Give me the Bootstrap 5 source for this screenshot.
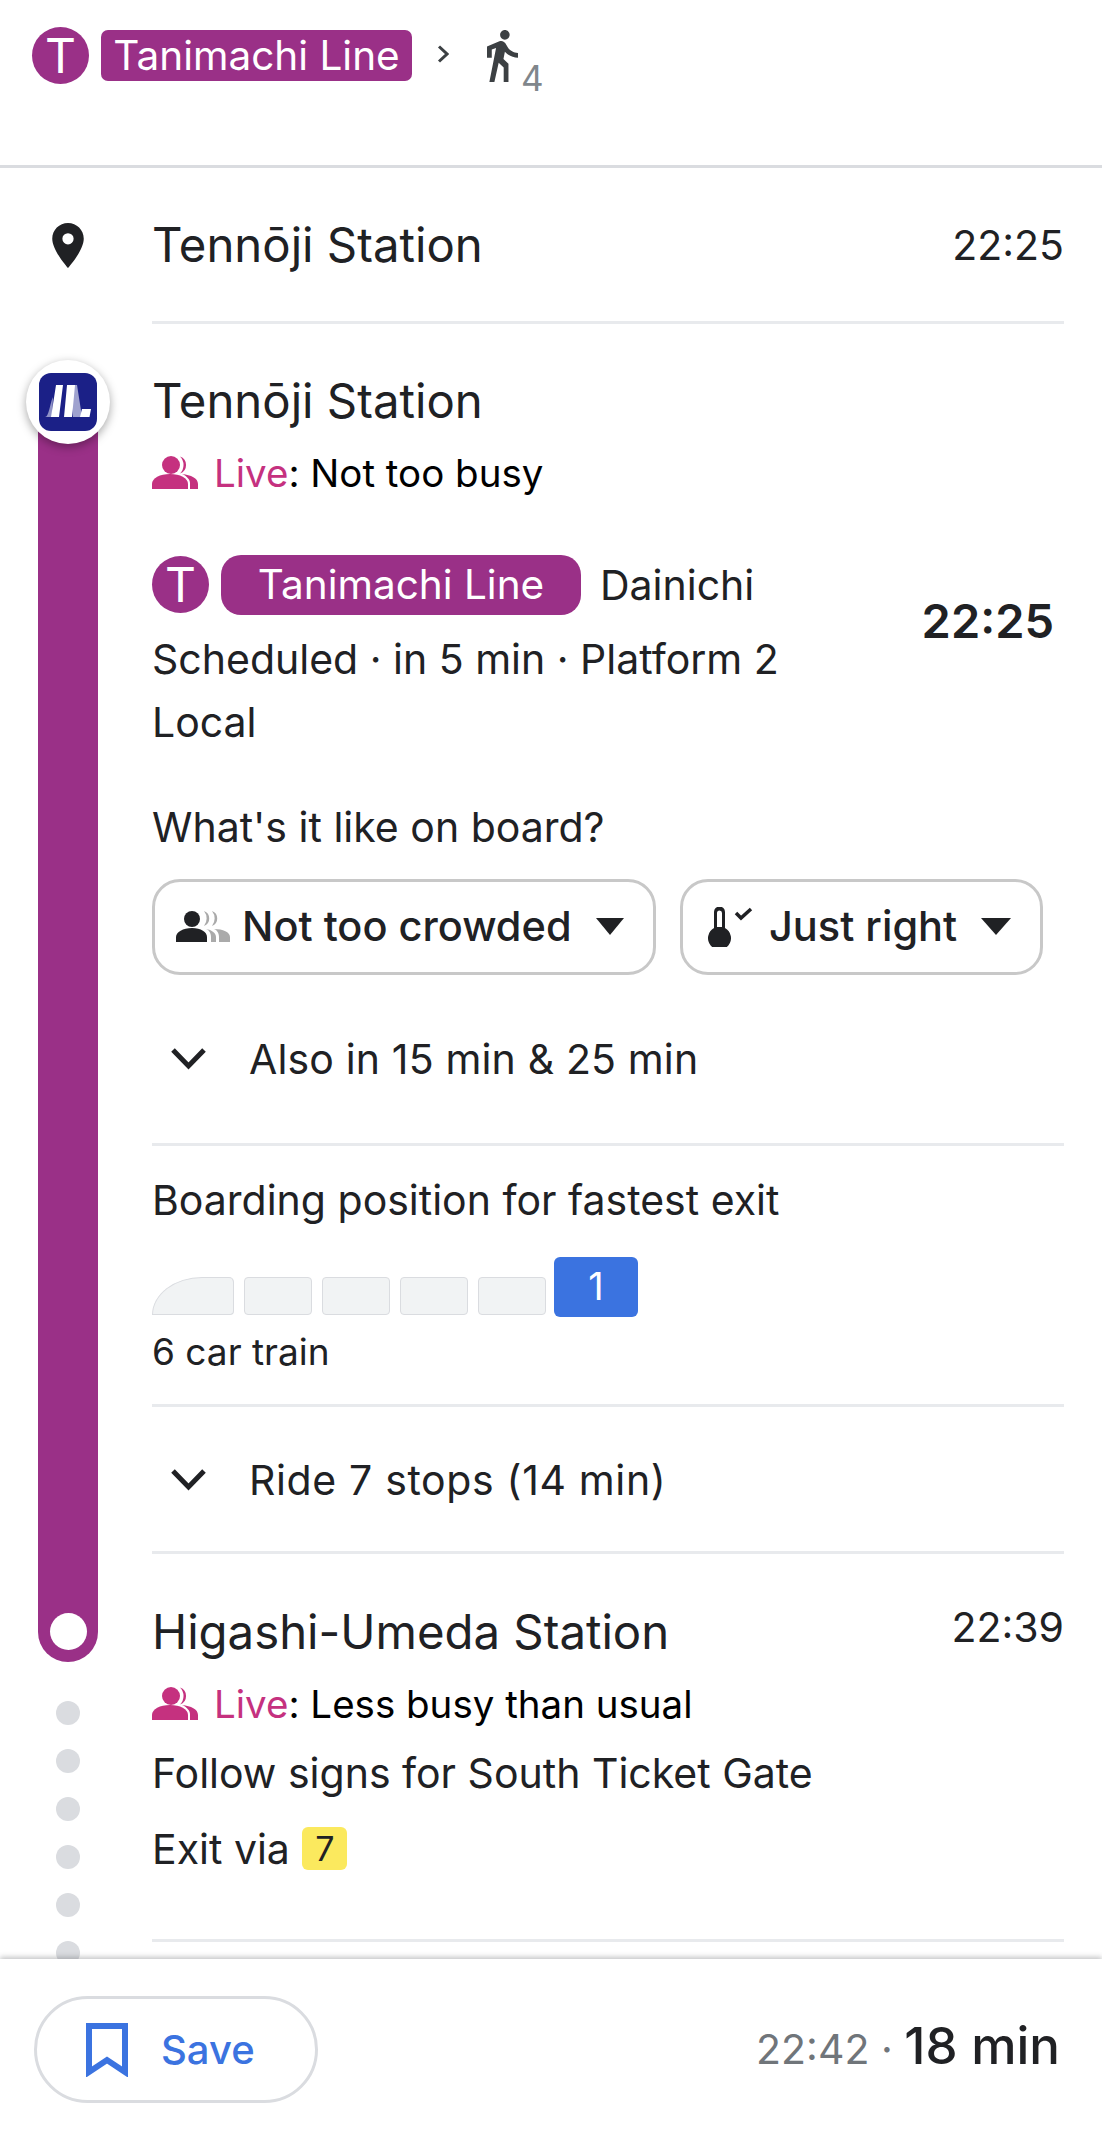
<!DOCTYPE html>
<html lang="en">
<head>
<meta charset="utf-8">
<title>Directions</title>
<link rel="stylesheet" href="https://cdn.jsdelivr.net/npm/bootstrap@5.3.0/dist/css/bootstrap.min.css">
<style>
html,body{height:100%;}
body{font-family:Inter,Roboto,"Liberation Sans",sans-serif;color:#202124;background:#fff;overflow:hidden;}
.shell{height:2129px;}
.top-bar{height:168px;border-bottom:3px solid #dadce0;padding:27px 0 0 32px;}
.t-mark{width:57px;height:57px;border-radius:50%;background:#9a3087;color:#fff;font-size:48px;line-height:57px;text-align:center;flex:none;}
.line-chip{background:#9a3087;color:#fff;font-size:40.5px;line-height:51px;height:51px;border-radius:7px;width:311px;text-align:center;margin:3px 0 0 12px;}
.crumb{margin:18px 0 0 25px;}
.walker{margin:3px 0 0 38px;}
.walk-num{font-size:35px;color:#80868b;line-height:40px;margin:31px 0 0 3px;}
.rule{height:3px;background:#e8eaed;}
.orig{height:153px;padding-top:2px;}
.rail-w{width:152px;flex:none;}
.pin{margin:55px 0 0 52px;display:block;}
.stop{font-size:47.3px;line-height:60px;font-weight:400;}
.stamp{font-size:41px;line-height:60px;}
.higa{margin-top:-5px;}
.leg{flex:1 1 auto;min-height:0;overflow:hidden;}
.rail{width:152px;flex:none;position:relative;padding:76px 0 0 38px;}
.bar{width:60px;height:1262px;background:#9a3087;border-radius:0 0 30px 30px;padding-bottom:12px;}
.bar-dot{width:37px;height:37px;border-radius:50%;background:#fff;}
.dots{gap:24px;padding:39px 0 0 18px;}
.dot-g{width:24px;height:24px;border-radius:50%;background:#dadce0;flex:none;}
.halo{position:absolute;left:26px;top:36px;width:84px;height:84px;border-radius:50%;background:#fff;box-shadow:0 3px 10px rgba(0,0,0,.35);}
.body-col{flex:1 1 auto;padding-right:38px;min-width:0;}
.txt{font-size:41px;line-height:50px;}
.live-line{font-size:38.5px;line-height:50px;margin-top:17px;}
.live{color:#c5317f;}
.ink{color:#000;}
.sec-a{padding-top:47px;}
.tr-row{margin-top:57px;}
.chip-big{background:#9a3087;color:#fff;font-size:40.5px;line-height:60px;height:60px;width:360px;border-radius:20px;text-align:center;margin:0 19px 0 12px;}
.tr-line{font-size:41px;line-height:63px;}
.tr-first{margin-top:13px;}
.tr-time{font-size:47px;font-weight:600;line-height:60px;margin:36px 10px 0 0;}
.ask{margin-top:48px;}
.picks{margin-top:27px;gap:24px;}
.pick{height:96px;border:3px solid #c8c8c8;border-radius:28px;background:#fff;font-size:41.5px;font-weight:450;color:#202124;padding:0;display:flex;align-items:center;}
.pick:hover{border-color:#c8c8c8;color:#202124;background:#fff;}
.pick-a{width:504px;padding-left:21px;}
.pick-b{width:363px;padding-left:25px;}
.exp{padding-left:19px;gap:43px;}
.exp-a{padding-top:59px;padding-bottom:59px;letter-spacing:.15px;}
.exp-b{padding-top:48px;padding-bottom:46px;letter-spacing:.65px;}
.board{padding-top:29px;}
.train{margin-top:32px;gap:10px;}
.car{width:68px;height:38px;background:#f1f3f4;border:1.5px solid #dadce0;border-radius:4px;margin-bottom:2px;}
.car-head{width:82px;border-radius:50px 5px 4px 0/38px 5px 4px 0;}
.car-on{width:84px;height:60px;background:#3b73e0;color:#fff;border-radius:6px;font-size:38px;line-height:58px;text-align:center;margin-left:-2px;}
.cars-note{font-size:37px;line-height:44px;margin-top:13px;padding-bottom:30px;}
.dest{padding-top:48px;}
.follow{margin-top:19px;}
.exit-row{margin-top:26px;padding-bottom:65px;}
.exit-tag{display:inline-block;width:45px;height:43px;line-height:43px;background:#fbe95e;border-radius:6px;text-align:center;margin-left:1px;font-size:34px;vertical-align:3px;}
.foot{height:170px;flex:none;background:#fff;padding:37px 42px 0 34px;box-shadow:0 -2px 5px rgba(60,64,67,.3);position:relative;}
.save{width:284px;height:107px;border:3px solid #dadce0;border-radius:54px;background:#fff;color:#3b73e0;font-size:40px;font-weight:500;padding:0 0 0 49px;display:flex;align-items:center;gap:33px;}
.save:hover{border-color:#dadce0;color:#3b73e0;background:#fff;}
.arrive{font-size:41px;color:#70757a;margin-top:12px;}
.span-big{font-size:51px;font-weight:500;color:#202124;}
</style>
</head>
<body>
<div class="shell d-flex flex-column">
  <header class="top-bar d-flex align-items-start flex-none">
    <div class="t-mark">T</div>
    <div class="line-chip">Tanimachi Line</div>
    <svg class="crumb" width="12" height="18" viewBox="0 0 12 18"><path d="M2 1.5 10 9l-8 7.5" fill="none" stroke="#3c4043" stroke-width="3"/></svg>
    <svg class="walker" width="31" height="52" viewBox="6 1.5 13 21.5" preserveAspectRatio="none"><path fill="#3c4043" d="M13.5 5.5c1.1 0 2-.9 2-2s-.9-2-2-2-2 .9-2 2 .9 2 2 2zM9.8 8.9L7 23h2.1l1.8-8 2.1 2v6h2v-7.5l-2.1-2 .6-3C14.8 12 16.8 13 19 13v-2c-1.9 0-3.5-1-4.3-2.4l-1-1.6c-.4-.6-1-1-1.7-1-.3 0-.5.1-.8.1L6 8.3V13h2V9.6l1.8-.7"/></svg>
    <div class="walk-num">4</div>
  </header>

  <section class="d-flex flex-none">
    <div class="rail-w"><svg class="pin" width="32" height="45" viewBox="5 2 14 20"><path fill="#202124" fill-rule="evenodd" d="M12 2C8.13 2 5 5.13 5 9c0 5.25 7 13 7 13s7-7.75 7-13c0-3.87-3.13-7-7-7zm0 9.500a2.500 2.500 0 1 1 0-5 2.500 2.500 0 0 1 0 5z"/></svg></div>
    <div class="body-col">
      <div class="orig d-flex justify-content-between align-items-center">
        <div class="stop">Tennōji Station</div>
        <div class="stamp">22:25</div>
      </div>
      <div class="rule"></div>
    </div>
  </section>

  <section class="leg d-flex">
    <div class="rail">
      <div class="bar d-flex align-items-end justify-content-center"><div class="bar-dot"></div></div>
      <div class="dots d-flex flex-column">
        <div class="dot-g"></div><div class="dot-g"></div><div class="dot-g"></div><div class="dot-g"></div><div class="dot-g"></div><div class="dot-g"></div>
      </div>
      <div class="halo d-flex align-items-center justify-content-center">
        <svg width="58" height="58" viewBox="0 0 58 58"><rect width="58" height="58" rx="12" fill="#1b2087"/><path d="M6 44C10 44 11 30 14 24l-1 20z" fill="#8f92c6"/><path d="M31 12h7l5 32h-9z" fill="#9fa2cf"/><path d="M17 12h7l-4 32h-8z" fill="#fff"/><path d="M28 12h8l-3 32h-8z" fill="#fff"/><path d="M43 36h9l-1.500 8H41z" fill="#fff"/></svg>
      </div>
    </div>
    <div class="body-col">
      <div class="sec-a">
        <div class="stop">Tennōji Station</div>
        <div class="live-line d-flex align-items-center gap-3">
          <svg width="46" height="33" viewBox="0 0 46 33"><circle cx="19" cy="9" r="9" fill="#c5317f"/><path d="M28 .5a9 9 0 0 1 0 17 12 12 0 0 0 0-17z" fill="#c5317f"/><path d="M0 33v-5c0-6 8-10 18-10s18 4 18 10v5z" fill="#c5317f"/><path d="M30 18c9 1 16 4 16 10v5h-8v-6c0-3-3-7-8-9z" fill="#c5317f"/></svg>
          <div class="ink"><span class="live">Live</span>: Not too busy</div>
        </div>
      </div>

      <div class="tr-row d-flex justify-content-between">
        <div>
          <div class="d-flex align-items-center">
            <div class="t-mark">T</div><div class="chip-big">Tanimachi Line</div><div class="txt">Dainichi</div>
          </div>
          <div class="tr-line tr-first">Scheduled · in 5 min · Platform 2</div>
          <div class="tr-line">Local</div>
        </div>
        <div class="tr-time">22:25</div>
      </div>

      <div class="txt ask">What's it like on board?</div>
      <div class="picks d-flex">
        <button type="button" class="btn pick pick-a">
          <svg width="54" height="31" viewBox="0 0 54 31"><path fill="#aaa" d="M28 0a8 8 0 0 1 0 15 12 12 0 0 0 0-15zM36 0a8 8 0 0 1 0 15 12 12 0 0 0 0-15zM35 31v-5c0-4-2-7-5-8 6 1 10 4 10 8v5zM43 31v-5c0-4-2-7-5-8 9 0 16 3 16 8v5z"/><circle cx="16" cy="8" r="8" fill="#202124"/><path d="M0 31v-5c0-5 7-9 16-9s15 4 15 9v5z" fill="#202124"/></svg>
          <span class="ms-2 ps-1">Not too crowded</span>
          <svg class="ms-4" width="28" height="17" viewBox="0 0 28 17"><path d="M0 0h28L14 17z" fill="#202124"/></svg>
        </button>
        <button type="button" class="btn pick pick-b">
          <svg width="45" height="40" viewBox="0 0 45 40" class="me-3"><path fill="#202124" fill-rule="evenodd" d="M6 5a5.500 5.500 0 0 1 11 0v16a11.500 11.500 0 1 1-11 0zM9 6v14h5V6a2.500 2.500 0 0 0-5 0z"/><path d="M28 6l5 5 10-9" fill="none" stroke="#202124" stroke-width="3.500"/></svg>
          <span>Just right</span>
          <svg class="ms-4" width="30" height="17" viewBox="0 0 30 17"><path d="M0 0h30L15 17z" fill="#202124"/></svg>
        </button>
      </div>

      <div class="exp exp-a d-flex align-items-center txt">
        <svg width="35" height="22" viewBox="0 0 35 22"><path d="M2 2l15.500 16L33 2" fill="none" stroke="#202124" stroke-width="5"/></svg>
        <div>Also in 15 min &amp; 25 min</div>
      </div>
      <div class="rule"></div>

      <div class="board">
        <div class="txt">Boarding position for fastest exit</div>
        <div class="train d-flex align-items-end">
          <div class="car car-head"></div><div class="car"></div><div class="car"></div><div class="car"></div><div class="car"></div><div class="car-on">1</div>
        </div>
        <div class="cars-note">6 car train</div>
      </div>
      <div class="rule"></div>

      <div class="exp exp-b d-flex align-items-center txt">
        <svg width="35" height="22" viewBox="0 0 35 22"><path d="M2 2l15.500 16L33 2" fill="none" stroke="#202124" stroke-width="5"/></svg>
        <div>Ride 7 stops (14 min)</div>
      </div>
      <div class="rule"></div>

      <div class="dest">
        <div class="d-flex justify-content-between align-items-start">
          <div class="stop">Higashi-Umeda Station</div>
          <div class="stamp higa">22:39</div>
        </div>
        <div class="live-line d-flex align-items-center gap-3">
          <svg width="46" height="33" viewBox="0 0 46 33"><circle cx="19" cy="9" r="9" fill="#c5317f"/><path d="M28 .5a9 9 0 0 1 0 17 12 12 0 0 0 0-17z" fill="#c5317f"/><path d="M0 33v-5c0-6 8-10 18-10s18 4 18 10v5z" fill="#c5317f"/><path d="M30 18c9 1 16 4 16 10v5h-8v-6c0-3-3-7-8-9z" fill="#c5317f"/></svg>
          <div class="ink"><span class="live">Live</span>: Less busy than usual</div>
        </div>
        <div class="txt follow">Follow signs for South Ticket Gate</div>
        <div class="txt exit-row">Exit via <span class="exit-tag">7</span></div>
      </div>
      <div class="rule"></div>
    </div>
  </section>

  <footer class="foot d-flex justify-content-between align-items-start">
    <button type="button" class="btn save">
      <svg width="42" height="54" viewBox="0 0 42 54"><path d="M3 3h36v46L21 37 3 49z" fill="none" stroke="#3b73e0" stroke-width="6"/></svg>
      <span>Save</span>
    </button>
    <div class="arrive">22:42 · <span class="span-big">18 min</span></div>
  </footer>
</div>
<script src="https://cdn.jsdelivr.net/npm/bootstrap@5.3.0/dist/js/bootstrap.bundle.min.js"></script>
</body>
</html>
